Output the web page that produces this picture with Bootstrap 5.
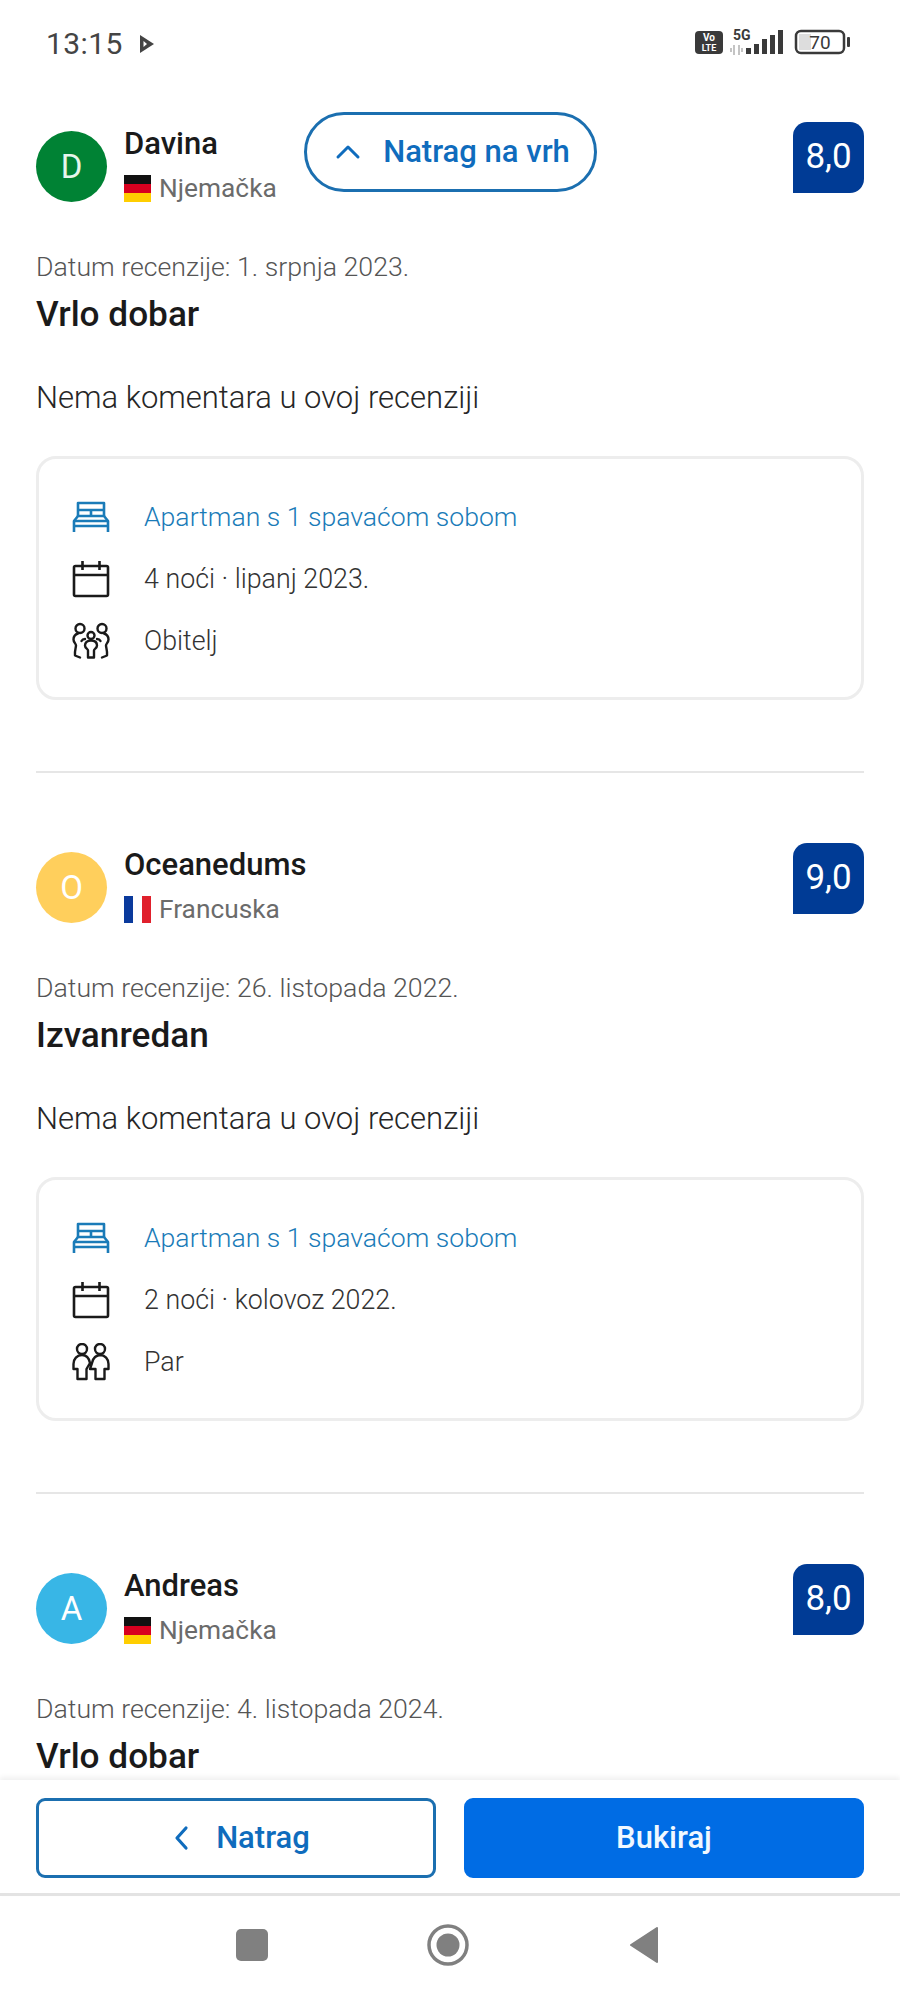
<!DOCTYPE html>
<html lang="hr">
<head>
<meta charset="utf-8">
<title>Recenzije</title>
<link rel="stylesheet" href="https://cdn.jsdelivr.net/npm/bootstrap@5.3.0/dist/css/bootstrap.min.css">
<style>
html,body{margin:0;background:#fff}
body{font-family:Roboto,"Liberation Sans",sans-serif;color:#1a1a1a}
.phone{width:900px;height:2000px;overflow:hidden;position:relative}
.statusbar{height:88px;padding:0 49px 0 46px;color:#444;flex:none}
.clock{font-size:30px;letter-spacing:.4px;line-height:1}
.scroller{min-height:0;overflow:hidden;padding:0 36px}
.review{height:721px;padding-top:34px;border:0}
.review-head{height:78px}
.avatar{width:71px;height:71px;font-size:33px;margin-top:9px;flex:none}
.av-green{background:#008234;color:#e6f6ec}
.av-yellow{background:#ffcf5c;color:#fff}
.av-blue{background:#38b6e6;color:#fff}
.reviewer{margin-left:17px}
.rname{font-size:31px;font-weight:500;line-height:34px;margin-top:5px}
.rcountry{font-size:26.3px;color:#6b6b6b;line-height:34px;margin-top:10px}
.flag{width:27px;height:27px;margin-right:8px;flex:none}
.scorebox{width:71px;height:71px;background:#003b95;color:#fff;font-size:35px;border-radius:14px 14px 14px 0}
.rdate{font-size:26.7px;font-weight:300;color:#555;line-height:30px;margin-top:52px}
.rtitle{font-size:35.2px;font-weight:500;line-height:40px;margin-top:12px;margin-bottom:0}
.rtext{font-size:31px;font-weight:300;line-height:36px;margin-top:46px;margin-bottom:0;color:#262626}
.stay{height:244px;margin-top:40px;border:3px solid #ededed;border-radius:20px;padding:27px 33px 0}
.stayrow{height:62px;font-size:26.8px;font-weight:300;color:#333;gap:34px}
.stayrow svg{width:38px;height:38px;flex:none}
.stayrow .room{color:#1a7bb8}
.stayrow span.room{font-size:26.6px}
.sep{height:2px;background:#e6e6e6;margin-top:71px}
.topbtn{position:absolute;left:304px;top:112px;width:293px;height:80px;border:3px solid #1b6fb0;border-radius:40px;background:#fff;color:#0f6cbd;font-size:31px;font-weight:500;gap:21px}
.topbtn svg{width:28px;height:28px;margin-left:3px}
.actions{height:116px;background:#fff;box-shadow:0 -3px 5px rgba(0,0,0,.06);padding:18px 36px 0;gap:28px;z-index:2;flex:none;border-bottom:3px solid #e3e3e3}
.actbtn{flex:0 0 400px;height:80px;border-radius:9px;font-size:31px;font-weight:500;padding:0}
.act-out{border:3px solid #1b6fb0;color:#0f6cbd;background:#fff;gap:22px;padding-left:8px}
.act-fill{background:#006ce4;color:#f0f8ff;border:3px solid #006ce4}
.act-out svg{width:24px;height:32px}
.sysnav{height:104px;flex:none;padding-bottom:6px;padding-right:5px}
.navcell{width:196px}
</style>
</head>
<body>
<svg width="0" height="0" class="position-absolute">
<defs>
<symbol id="i-bed" viewBox="0 0 38 38"><g fill="none" stroke="currentColor" stroke-width="2.600" stroke-linejoin="round"><path d="M6 18V5h26v13"/><path d="M6 12h26M19 12v6"/><path d="M2 28V23l4-5h26l4 5v5"/><path d="M2 23h34M2 28h34M2 28v6M36 28v6"/></g></symbol>
<symbol id="i-cal" viewBox="0 0 38 38"><g fill="none" stroke="#1a1a1a" stroke-width="2.600" stroke-linejoin="round"><rect x="2" y="6" width="34" height="30" rx="1.500"/><path d="M2 15h34M10.500 1v9M27.500 1v9"/></g></symbol>
<symbol id="i-fam" viewBox="0 0 38 38"><g fill="none" stroke="#1a1a1a" stroke-width="2.400" stroke-linecap="round" stroke-linejoin="round"><circle cx="8" cy="6.500" r="4.500"/><circle cx="30" cy="6.500" r="4.500"/><circle cx="19" cy="13.500" r="3.500"/><path d="M6 11.500c-3 1-4.500 3-4.500 6 0 3 2.500 4 2.500 6s-1.500 5-1 10l5 2"/><path d="M32 11.500c3 1 4.500 3 4.500 6 0 3-2.500 4-2.500 6s1.500 5 1 10l-5 2"/><path d="M13 17c-2 0-3 1-3.500 2M25 17c2 0 3 1 3.500 2"/><path d="M19 18.500c-4 0-6 2-6 5s3 3 3 5v7h6v-7c0-2 3-2 3-5s-2-5-6-5z"/></g></symbol>
<symbol id="i-par" viewBox="0 0 38 38"><g fill="none" stroke="#1a1a1a" stroke-width="2.400" stroke-linecap="round" stroke-linejoin="round"><circle cx="10" cy="6" r="5"/><circle cx="28" cy="6" r="5"/><path d="M10 12c-5 0-8.500 4-8.500 9v5h4v10h9V26l3.500-6M28 12c5 0 8.500 4 8.500 9v5h-4v10h-9V26h-5.500l2-6c1-5 4-8 9-8zM10 12c4 0 7 3 8 8"/></g></symbol>
<symbol id="i-de" viewBox="0 0 27 27"><rect width="27" height="9" fill="#111"/><rect y="9" width="27" height="9" fill="#d8001f"/><rect y="18" width="27" height="9" fill="#ffce00"/></symbol>
<symbol id="i-fr" viewBox="0 0 27 27"><rect width="9" height="27" fill="#0a3a9c"/><rect x="9" width="9" height="27" fill="#fff"/><rect x="18" width="9" height="27" fill="#e0202c"/></symbol>
</defs>
</svg>

<div class="phone d-flex flex-column">
  <div class="statusbar d-flex align-items-center justify-content-between">
    <div class="d-flex align-items-center gap-3">
      <span class="clock">13:15</span>
      <svg width="16" height="20" viewBox="0 0 16 20"><path d="M1 1l14 9-14 9z" fill="#444"/><path d="M4.500 7l3.500 3-3.500 3z" fill="#fff"/></svg>
    </div>
    <svg width="156" height="32" viewBox="0 0 156 32" font-family="Roboto,sans-serif">
      <rect x="0" y="3" width="28" height="23" rx="4" fill="#3a3a3a"/>
      <text x="14" y="13" font-size="10" font-weight="700" fill="#fff" text-anchor="middle">Vo</text>
      <text x="14" y="23" font-size="9" font-weight="700" fill="#fff" text-anchor="middle">LTE</text>
      <text x="38" y="12" font-size="14" font-weight="700" fill="#3a3a3a">5G</text>
      <path d="M36 20v4M39 17v10M44 17v10M47 20v4" stroke="#c4c4c4" stroke-width="2"/>
      <g fill="#3a3a3a"><rect x="51" y="20" width="5" height="6"/><rect x="59" y="16" width="5" height="10"/><rect x="67" y="11" width="5" height="15"/><rect x="75" y="7" width="5" height="19"/><rect x="83" y="2" width="5" height="24"/></g>
      <rect x="101" y="3" width="48" height="22" rx="5" fill="#fff" stroke="#3a3a3a" stroke-width="2.500"/>
      <rect x="104" y="6" width="12" height="16" fill="#ddd"/>
      <text x="125" y="21" font-size="19" fill="#3a3a3a" text-anchor="middle">70</text>
      <rect x="152" y="9" width="3" height="10" rx="1" fill="#3a3a3a"/>
    </svg>
  </div>

  <div class="scroller flex-grow-1">
    <article class="review">
      <div class="review-head d-flex">
        <div class="avatar av-green rounded-circle d-flex align-items-center justify-content-center">D</div>
        <div class="reviewer flex-grow-1">
          <div class="rname">Davina</div>
          <div class="rcountry d-flex align-items-center"><svg class="flag"><use href="#i-de"/></svg>Njemačka</div>
        </div>
        <div class="scorebox d-flex align-items-center justify-content-center">8,0</div>
      </div>
      <div class="rdate">Datum recenzije: 1. srpnja 2023.</div>
      <h3 class="rtitle">Vrlo dobar</h3>
      <p class="rtext">Nema komentara u ovoj recenziji</p>
      <div class="stay d-flex flex-column">
        <div class="stayrow d-flex align-items-center"><svg class="room"><use href="#i-bed"/></svg><span class="room">Apartman s 1 spavaćom sobom</span></div>
        <div class="stayrow d-flex align-items-center"><svg><use href="#i-cal"/></svg><span>4 noći · lipanj 2023.</span></div>
        <div class="stayrow d-flex align-items-center"><svg><use href="#i-fam"/></svg><span>Obitelj</span></div>
      </div>
      <div class="sep"></div>
    </article>

    <article class="review">
      <div class="review-head d-flex">
        <div class="avatar av-yellow rounded-circle d-flex align-items-center justify-content-center">O</div>
        <div class="reviewer flex-grow-1">
          <div class="rname">Oceanedums</div>
          <div class="rcountry d-flex align-items-center"><svg class="flag"><use href="#i-fr"/></svg>Francuska</div>
        </div>
        <div class="scorebox d-flex align-items-center justify-content-center">9,0</div>
      </div>
      <div class="rdate">Datum recenzije: 26. listopada 2022.</div>
      <h3 class="rtitle">Izvanredan</h3>
      <p class="rtext">Nema komentara u ovoj recenziji</p>
      <div class="stay d-flex flex-column">
        <div class="stayrow d-flex align-items-center"><svg class="room"><use href="#i-bed"/></svg><span class="room">Apartman s 1 spavaćom sobom</span></div>
        <div class="stayrow d-flex align-items-center"><svg><use href="#i-cal"/></svg><span>2 noći · kolovoz 2022.</span></div>
        <div class="stayrow d-flex align-items-center"><svg><use href="#i-par"/></svg><span>Par</span></div>
      </div>
      <div class="sep"></div>
    </article>

    <article class="review">
      <div class="review-head d-flex">
        <div class="avatar av-blue rounded-circle d-flex align-items-center justify-content-center">A</div>
        <div class="reviewer flex-grow-1">
          <div class="rname">Andreas</div>
          <div class="rcountry d-flex align-items-center"><svg class="flag"><use href="#i-de"/></svg>Njemačka</div>
        </div>
        <div class="scorebox d-flex align-items-center justify-content-center">8,0</div>
      </div>
      <div class="rdate">Datum recenzije: 4. listopada 2024.</div>
      <h3 class="rtitle">Vrlo dobar</h3>
    </article>
  </div>

  <div class="actions d-flex">
    <a class="actbtn act-out btn d-flex align-items-center justify-content-center" href="#">
      <svg viewBox="0 0 24 32"><path d="M16 6L7 16l9 10" fill="none" stroke="currentColor" stroke-width="3.200" stroke-linecap="round" stroke-linejoin="round"/></svg>Natrag</a>
    <a class="actbtn act-fill btn d-flex align-items-center justify-content-center" href="#">Bukiraj</a>
  </div>

  <div class="sysnav d-flex justify-content-center align-items-center">
    <div class="navcell d-flex justify-content-center"><svg width="32" height="32" viewBox="0 0 32 32"><rect width="32" height="32" rx="5" fill="#808080"/></svg></div>
    <div class="navcell d-flex justify-content-center"><svg width="42" height="42" viewBox="0 0 42 42"><circle cx="21" cy="21" r="19" fill="none" stroke="#808080" stroke-width="3.500"/><circle cx="21" cy="21" r="11.500" fill="#808080"/></svg></div>
    <div class="navcell d-flex justify-content-center"><svg width="30" height="36" viewBox="0 0 30 36"><path d="M28 1v34L2 18z" fill="#808080" stroke="#808080" stroke-linejoin="round" stroke-width="2"/></svg></div>
  </div>

  <a class="topbtn d-flex align-items-center justify-content-center text-decoration-none" href="#">
    <svg viewBox="0 0 28 28"><path d="M4 19l10-10 10 10" fill="none" stroke="currentColor" stroke-width="3" stroke-linecap="round" stroke-linejoin="round"/></svg>Natrag na vrh</a>
</div>
<script src="https://cdn.jsdelivr.net/npm/bootstrap@5.3.0/dist/js/bootstrap.bundle.min.js"></script>
</body>
</html>
